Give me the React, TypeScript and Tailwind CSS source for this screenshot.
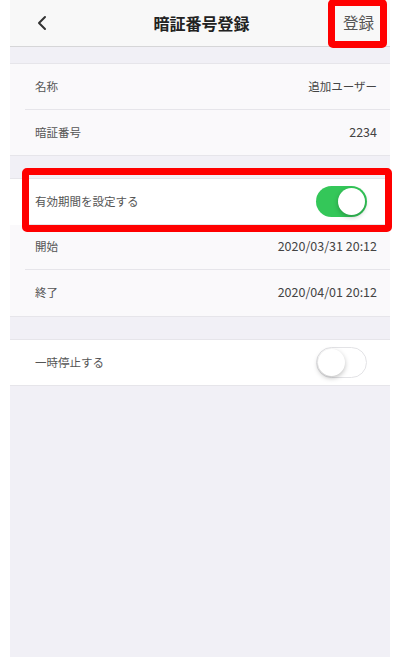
import { ChevronLeft } from "lucide-react";

const FONT = { fontFamily: '"Noto Sans CJK JP", "Noto Sans", sans-serif' };

function Toggle({ on }: { on: boolean }) {
  return (
    <div
      className={`relative w-[51px] h-[31px] mr-[10px] rounded-full ${on ? "bg-[#34c759]" : "bg-white border border-[#e3e3e6]"}`}
    >
      <div
        className={`absolute w-[27px] h-[27px] rounded-full bg-white shadow-[0_2px_5px_rgba(0,0,0,0.25)] ${on ? "right-[2px] top-[2px]" : "left-[1px] top-[1px]"}`}
      />
    </div>
  );
}

function Row({ label, value, toggle, white, last, kana }: { label: string; value?: string; toggle?: boolean; white?: boolean; last?: boolean; kana?: boolean }) {
  return (
    <div className={`pl-[15px] ${white ? "bg-white" : "bg-[#faf9fb]"}`}>
      <div className={`h-[45.5px] flex items-center justify-between pl-[10px] pr-[13px] ${last ? "" : "border-b border-[#e6e5ea]"}`}>
        <span className="text-[11.5px] text-[#555]">{label}</span>
        {value && <span className={`${kana ? "text-[11.5px]" : "text-[12.5px]"} text-[#444]`}>{value}</span>}
        {toggle !== undefined && <Toggle on={toggle} />}
      </div>
    </div>
  );
}

export default function App() {
  return (
    <div className="w-[400px] h-[657px] bg-white flex justify-center relative overflow-hidden" style={FONT}>
      <div className="w-[380px] h-full bg-[#f1f0f6] flex flex-col">
        {/* nav bar */}
        <div className="h-[47px] bg-[#f8f8f8] border-b border-[#d6d6d8] flex items-center justify-between pl-[20px] pr-[16px]">
          <ChevronLeft className="w-[24px] h-[24px] text-[#333]" strokeWidth={2} />
          <span className="text-[16px] font-bold text-[#222] ml-[6px]">暗証番号登録</span>
          <span className="text-[15.5px] text-[#555]">登録</span>
        </div>

        <div className="h-[16px]" />
        <div className="border-t border-b border-[#e6e5ea]">
          <Row label="名称" value="追加ユーザー" kana />
          <Row label="暗証番号" value="2234" last />
        </div>

        <div className="h-[22px]" />
        <div className="border-t border-b border-[#e6e5ea]">
          <Row label="有効期間を設定する" toggle={true} white />
          <Row label="開始" value="2020/03/31 20:12" />
          <Row label="終了" value="2020/04/01 20:12" last />
        </div>

        <div className="h-[22px]" />
        <div className="border-t border-b border-[#e6e5ea]">
          <Row label="一時停止する" toggle={false} white last />
        </div>
      </div>

      {/* red annotation boxes */}
      <div className="absolute left-[328px] top-[-1px] w-[59px] h-[49px] border-[7px] border-[#ff0000] rounded-[5px]" />
      <div className="absolute left-[22px] top-[168px] w-[370px] h-[64px] border-[7px] border-[#ff0000] rounded-[5px]" />
    </div>
  );
}
